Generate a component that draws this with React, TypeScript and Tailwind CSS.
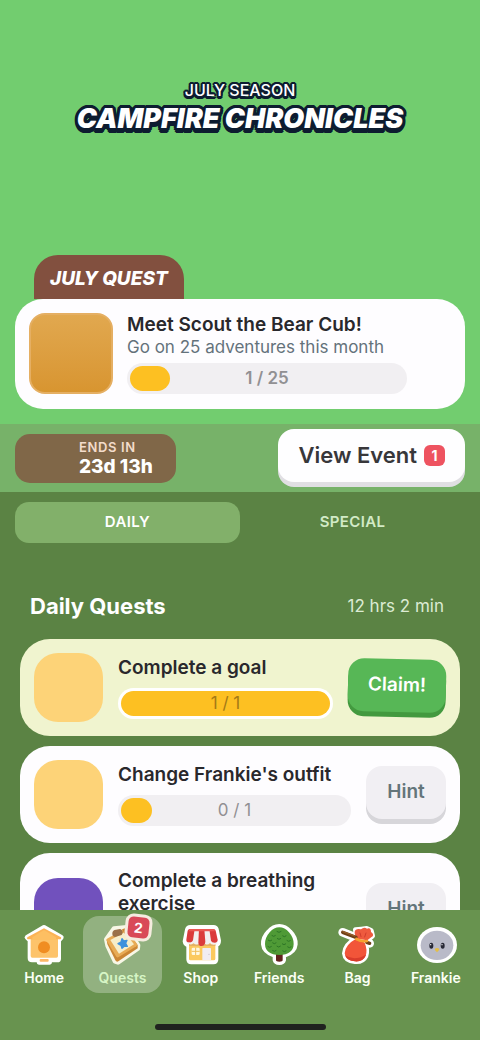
import { ReactNode, useState } from "react";
import clsx from "clsx";

type Quest = {
  title: string;
  done: number;
  total: number;
  color: string;
};

const quests: Quest[] = [
  { title: "Complete a goal", done: 1, total: 1, color: "bg-[#fdd378]" },
  { title: "Change Frankie's outfit", done: 0, total: 1, color: "bg-[#fdd378]" },
  {
    title: "Complete a breathing exercise",
    done: 0,
    total: 1,
    color: "bg-[#7151bd]",
  },
];

const HomeIcon = () => (
  <svg viewBox="66 69 132 132" className="size-11" aria-hidden="true">
    <path
      d="M132 82 L184 112 L176 121 V176 Q176 180 172 180 H149 V187 H117 V180 H96 Q90 180 90 174 V121 L81 112 Z"
      fill="#fff"
      stroke="#fff"
      strokeWidth="14"
      strokeLinejoin="round"
    />
    <path d="M92 112 H174 V168 Q174 173 169 173 H97 Q92 173 92 168 Z" fill="#fdc36b" />
    <path
      d="M132 85 L183 112 Q185 118 178 118 H86 Q79 118 82 112 Z"
      fill="#fcb355"
    />
    <path d="M132 90 L168 112 V120 H97 V112 Z" fill="#fdbf62" />
    <circle cx="132" cy="142" r="18" fill="#f08d22" />
    <rect x="119" y="177" width="27" height="8" rx="3" fill="#fcb868" />
  </svg>
);

const QuestsIcon = () => (
  <svg viewBox="300 69 132 132" className="size-11" aria-hidden="true">
    <path
      d="M319 118 L342 86 L358 84 L380 82 L414 136 L413 146 L354 187 L345 184 L323 137 Z"
      fill="#f8f7e6"
      stroke="#f8f7e6"
      strokeWidth="14"
      strokeLinejoin="round"
    />
    <path
      d="M320 119 L376 88 L413 135 V145 L355 184 Q350 187 346 181 L322 132 Z"
      fill="#cb8634"
    />
    <path
      d="M321 116 L374 86 Q378 84 381 88 L411 132 Q413 136 409 139 L356 171 Q351 174 348 169 L320 122 Q318 118 321 116 Z"
      fill="#e8ab55"
    />
    <path d="M331 120 L374 97 L402 133 L357 161 Z" fill="#f7edc9" />
    <path d="M337 99 Q338 90 348 89 L360 87 Q368 89 368 98 L365 105 L345 111 Q336 109 337 99 Z" fill="#9a7048" />
    <path d="M366 88 L378 84 L389 101 L377 106 Z" fill="#cb8634" />
    <path
      d="M366 116 L371 123 L381 121 L377 130 L382 139 L373 139 L366 145 L363 136 L354 131 L363 126 Z"
      fill="#3e91dc"
      stroke="#3e91dc"
      strokeWidth="4"
      strokeLinejoin="round"
    />
  </svg>
);

const ShopIcon = () => (
  <svg viewBox="54 69 132 132" className="size-11" aria-hidden="true">
    <path
      d="M88 82 H158 Q164 82 166 88 L173 122 Q173 132 165 134 V178 Q165 186 157 186 H91 Q83 186 83 178 V136 Q73 133 72 124 L79 89 Q81 82 88 82 Z"
      fill="#fff"
      stroke="#fff"
      strokeWidth="14"
      strokeLinejoin="round"
    />
    <path d="M84 126 H163 V176 Q163 181 158 181 H89 Q84 181 84 176 Z" fill="#fbc95f" />
    <path d="M84 126 H163 V138 H84 Z" fill="#e4b263" />
    <path d="M87 87 H157 L170 122 Q170 133 158 134 Q149 134 147 129 Q140 137 132 131 Q123 140 113 131 Q105 137 98 130 Q92 135 84 132 Q76 129 78 119 Z" fill="#f3efef" />
    <path d="M86 87 H101 L96 121 Q94 128 85 127 Q75 127 76 119 L80 92 Q82 87 86 87 Z" fill="#db3b3b" />
    <path d="M114 87 H130 L133 126 Q131 138 122 138 Q113 138 112 128 Z" fill="#db3b3b" />
    <path d="M145 87 H158 Q162 87 164 92 L170 119 Q170 127 161 128 Q152 128 150 122 Z" fill="#db3b3b" />
    <path d="M86 87 H159 L162 94 H82 Z" fill="#ea5753" />
    <rect x="92" y="143" width="24" height="22" rx="4" fill="#fff8df" />
    <path d="M104 143 V165 M92 154 H116" stroke="#f0bd59" strokeWidth="3" />
    <rect x="124" y="144" width="26" height="37" rx="2" fill="#f1edf2" />
    <circle cx="144" cy="163" r="2" fill="#c9bfc9" />
  </svg>
);

const FriendsIcon = () => (
  <svg viewBox="291 69 132 132" className="size-11" aria-hidden="true">
    <path
      d="M358 79 Q376 79 390 95 Q407 112 406 133 Q404 155 377 164 L371 166 V180 Q369 188 358 188 Q347 188 345 180 V166 L340 164 Q312 155 310 133 Q309 112 326 95 Q340 79 358 79 Z"
      fill="#fff"
      stroke="#fff"
      strokeWidth="14"
      strokeLinejoin="round"
    />
    <path d="M348 160 H368 V181 Q368 185 358 185 Q348 185 348 181 Z" fill="#61231c" />
    <path
      d="M358 82 Q374 82 387 97 Q401 113 401 132 Q400 164 358 165 Q316 164 315 132 Q315 113 329 97 Q342 82 358 82 Z"
      fill="#4f9a36"
    />
    <path
      d="M350 94 l7 3 l7 -3 M335 106 l6 3 l6 -3 M367 107 l6 3 l6 -3 M351 115 l6 3 l6 -3 M324 120 l6 3 l6 -3 M380 121 l6 3 l6 -3 M337 128 l6 3 l6 -3 M366 131 l6 3 l6 -3 M350 138 l6 3 l6 -3 M323 139 l6 3 l6 -3 M382 140 l6 3 l6 -3 M337 151 l6 3 l6 -3 M367 152 l6 3 l6 -3"
      fill="none"
      stroke="#2d7526"
      strokeWidth="3"
    />
  </svg>
);

const BagIcon = () => (
  <svg viewBox="45 69 132 132" className="size-11" aria-hidden="true">
    <g fill="#fff" stroke="#fff" strokeWidth="16" strokeLinejoin="round" strokeLinecap="round">
      <path d="M110 114 L107 90 L124 88 L140 86 L153 92 L157 108 L142 120 Z" />
      <path d="M106 118 Q124 120 134 128 Q143 149 137 168 Q128 186 105 184 Q76 182 74 160 Q76 134 106 118 Z" />
      <path d="M68 97 L149 130" strokeWidth="26" />
    </g>
    <path
      d="M111 116 Q103 103 104 95 Q107 84 123 88 Q132 79 141 86 Q153 82 153 96 Q162 102 158 109 Q151 114 142 121 Z"
      fill="#ee5a3e"
    />
    <path
      d="M106 118 Q124 120 134 128 Q143 149 137 168 Q128 186 105 184 Q76 182 74 160 Q76 134 106 118 Z"
      fill="#f25539"
    />
    <path d="M75 166 Q103 184 138 164 Q130 186 105 184 Q81 183 75 166 Z" fill="#d93c2b" />
    <path d="M68 97 L108 112 M140 127 L149 130" stroke="#704016" strokeWidth="10" strokeLinecap="round" />
    <path d="M69 95 L104 108" stroke="#99602b" strokeWidth="4" strokeLinecap="round" />
    <path d="M109 117 Q124 126 141 123" fill="none" stroke="#f5a22f" strokeWidth="8" strokeLinecap="round" />
    <path d="M120 99 L123 110 M138 99 L134 111" stroke="#d03c2c" strokeWidth="3" strokeLinecap="round" />
  </svg>
);

const FrankieIcon = () => (
  <svg viewBox="279 69 132 132" className="size-11" aria-hidden="true">
    <ellipse cx="348" cy="135" rx="60" ry="54" fill="#fff" />
    <ellipse cx="348" cy="136" rx="49" ry="44" fill="#b9bac8" />
    <ellipse cx="331" cy="137" rx="6" ry="9" fill="#282936" />
    <ellipse cx="365" cy="137" rx="6" ry="9" fill="#282936" />
    <circle cx="329" cy="134" r="2" fill="#fff" />
    <circle cx="363" cy="134" r="2" fill="#fff" />
    <path d="M341 147 Q348 141 355 147 Q355 151 348 157 Q341 151 341 147 Z" fill="#e4be48" />
  </svg>
);

const navItems = [
  { label: "Home", icon: HomeIcon },
  { label: "Quests", icon: QuestsIcon, badge: 2 },
  { label: "Shop", icon: ShopIcon },
  { label: "Friends", icon: FriendsIcon },
  { label: "Bag", icon: BagIcon },
  { label: "Frankie", icon: FrankieIcon },
];

type ProgressProps = {
  children: ReactNode;
  fill: string;
  className?: string;
};

const Progress = ({ children, fill, className }: ProgressProps) => (
  <div
    className={clsx(
      "relative flex h-[31px] items-center justify-center rounded-full text-[17px]",
      className
    )}
  >
    <div className={clsx("absolute inset-y-[3px] left-[3px] rounded-full bg-[#fdc022]", fill)} />
    <span className="relative">{children}</span>
  </div>
);

const QuestCard = ({ quest }: { quest: Quest }) => {
  const complete = quest.done >= quest.total;

  return (
    <li
      className={clsx(
        "flex items-center gap-[15px] rounded-[30px] px-3.5 py-3.5",
        complete ? "bg-[#f0f4cf]" : "bg-[#fefdff]"
      )}
    >
      <div className={clsx("size-[69px] shrink-0 rounded-3xl", quest.color)} />
      <div className="min-w-0 flex-1 py-0.5">
        <h3 className="text-[19px] leading-[23px] font-semibold text-[#29282c]">
          {quest.title}
        </h3>
        <Progress
          fill={complete ? "right-[3px]" : "w-[31px]"}
          className={clsx(
            "mt-[9px]",
            complete ? "bg-white text-[#a47a16]" : "bg-[#f1eff2] text-[#919093]"
          )}
        >
          {quest.done} / {quest.total}
        </Progress>
      </div>
      {complete ? (
        <button className="mb-[5px] h-[53px] w-[98px] shrink-0 rotate-[1.5deg] rounded-2xl bg-[#57b756] text-[19px] font-semibold text-white shadow-[0_5px_0_#43993f]">
          Claim!
        </button>
      ) : (
        <button className="mb-[5px] h-[53px] w-20 shrink-0 rounded-2xl bg-[#f1eff3] text-[19px] font-semibold text-[#64757a] shadow-[0_5px_0_#d7d6da]">
          Hint
        </button>
      )}
    </li>
  );
};

const App = () => {
  const [tab, setTab] = useState("DAILY");

  return (
    <div className="flex h-screen flex-col bg-[#5b8344] font-['Inter',sans-serif]">
      <main className="min-h-0 flex-1 overflow-y-auto [scrollbar-width:none]">
        <header className="bg-[#72cd6f] px-[15px] pt-20 pb-[15px]">
          <div className="text-center text-white">
            <p className="text-base leading-5 font-medium [text-shadow:2px_0_#0d1c30,-2px_0_#0d1c30,0_-2px_#0d1c30,2px_-1px_#0d1c30,-2px_-1px_#0d1c30,1px_-2px_#0d1c30,-1px_-2px_#0d1c30,2px_2px_#0d1c30,-2px_2px_#0d1c30,1px_3px_#0d1c30,-1px_3px_#0d1c30,0_3px_#0d1c30]">
              JULY SEASON
            </p>
            <h1 className="text-[27px] leading-[38px] font-black italic [text-shadow:3px_0_#0d1c30,-3px_0_#0d1c30,0_-3px_#0d1c30,2px_-2px_#0d1c30,-2px_-2px_#0d1c30,1px_-3px_#0d1c30,-1px_-3px_#0d1c30,3px_-1px_#0d1c30,-3px_-1px_#0d1c30,3px_2px_#0d1c30,-3px_2px_#0d1c30,2px_4px_#0d1c30,-2px_4px_#0d1c30,1px_5px_#0d1c30,-1px_5px_#0d1c30,0_5px_#0d1c30]">
              CAMPFIRE CHRONICLES
            </h1>
          </div>

          <h2 className="mt-[117px] ml-[19px] flex h-11 w-fit items-center rounded-t-3xl bg-[#82503f] px-4 pt-1 text-[19px] leading-6 font-extrabold text-white italic">
            JULY QUEST
          </h2>
          <section className="flex gap-3.5 rounded-[28px] bg-[#fefdff] px-3.5 pt-3.5 pb-[15px]">
            <div className="h-[81px] w-[84px] shrink-0 rounded-2xl border-2 border-[#e5af63] bg-linear-to-b from-[#e1a84f] to-[#d89530]" />
            <div className="max-w-[280px] min-w-0 flex-1">
              <h3 className="text-[19px] leading-6 font-semibold text-[#29282c]">
                Meet Scout the Bear Cub!
              </h3>
              <p className="text-[17px] leading-5 text-[#64727b]">
                Go on 25 adventures this month
              </p>
              <Progress
                fill="w-10"
                className="mt-1.5 bg-[#f1eff2] font-semibold text-[#919093]"
              >
                1 / 25
              </Progress>
            </div>
          </section>
        </header>

        <div className="flex h-[68px] items-center justify-between bg-[#77b269] px-[15px]">
          <div className="flex h-[49px] w-[161px] flex-col justify-center rounded-[15px] bg-[#806748] pb-0.5 pl-16">
            <span className="text-[13px] leading-5 font-semibold tracking-wider text-[#f3dccb]">
              ENDS IN
            </span>
            <span className="text-[19px] leading-5 font-extrabold text-white">23d 13h</span>
          </div>
          <button className="mb-[5px] flex h-[53px] items-center gap-[7px] rounded-2xl bg-[#fefeff] px-5 text-[22px] font-semibold text-[#38373a] shadow-[0_5px_0_#e0dfe3]">
            View Event
            <span className="flex size-[21px] items-center justify-center rounded-md bg-[#ee5360] text-sm font-bold text-white">
              1
            </span>
          </button>
        </div>

        <div role="tablist" className="grid grid-cols-2 px-[15px] pt-2.5">
          {["DAILY", "SPECIAL"].map((name) => (
            <button
              key={name}
              role="tab"
              aria-selected={tab === name}
              onClick={() => setTab(name)}
              className={clsx(
                "h-[41px] rounded-[14px] text-[15px] font-semibold tracking-wide",
                tab === name ? "bg-[#82b06a] text-white" : "text-[#d2eac6]"
              )}
            >
              {name}
            </button>
          ))}
        </div>

        <section className="px-5 pt-[49px] pb-5">
          <div className="mb-[19px] flex items-center justify-between pr-4 pl-2.5">
            <h2 className="text-[22px] leading-7 font-bold text-white">Daily Quests</h2>
            <p className="text-[17px] leading-6 text-[#dcebd3]">12 hrs 2 min</p>
          </div>
          <ul className="flex flex-col gap-2.5">
            {quests.map((quest) => (
              <QuestCard key={quest.title} quest={quest} />
            ))}
          </ul>
        </section>
      </main>

      <nav className="shrink-0 bg-[#68934f] px-[5px] pt-1.5 pb-2.5">
        <div className="grid grid-cols-6">
          {navItems.map(({ label, icon: Icon, badge }) => (
            <a
              key={label}
              href="#"
              className={clsx(
                "relative flex h-[77px] flex-col items-center rounded-2xl pt-[7px] text-sm leading-[22px] font-semibold",
                badge ? "bg-[#92b180] text-[#d6f5c5]" : "text-[#fbfff5]"
              )}
            >
              <Icon />
              {label}
              {badge && (
                <span className="absolute -top-0.5 right-2.5 flex size-[27px] rotate-6 items-center justify-center rounded-lg border-3 border-[#f5ecdf] bg-[#d94a58] text-sm leading-none font-bold text-white">
                  {badge}
                </span>
              )}
            </a>
          ))}
        </div>
        <div className="mx-auto mt-[31px] h-1.5 w-[171px] rounded-full bg-[#20221f]" />
      </nav>
    </div>
  );
};

export default App;
